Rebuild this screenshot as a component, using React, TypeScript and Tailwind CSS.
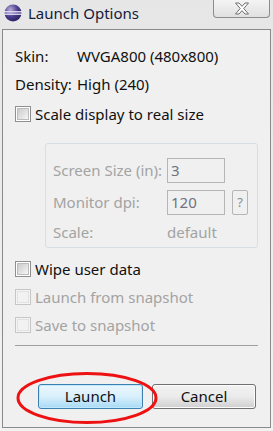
import React from 'react';

const FONT = "font-['Noto_Sans','Open_Sans',sans-serif]";

function EclipseIcon() {
  return (
    <svg width="18" height="18" viewBox="0 0 18 18">
      <defs>
        <radialGradient id="eg" cx="35%" cy="30%" r="75%">
          <stop offset="0%" stopColor="#b9a9d6" />
          <stop offset="55%" stopColor="#4b3f8f" />
          <stop offset="100%" stopColor="#2a1f5c" />
        </radialGradient>
      </defs>
      <circle cx="9" cy="9" r="8.5" fill="url(#eg)" />
      <rect x="0" y="7.2" width="18" height="1.2" fill="#f4f0ff" />
      <rect x="0" y="9.6" width="18" height="1.2" fill="#f4f0ff" />
    </svg>
  );
}

function CloseGlyph() {
  return (
    <svg width="16" height="13" viewBox="0 0 16 13">
      <path
        d="M1.5 1 H5 L8 4.3 L11 1 H14.5 L9.8 6.5 L14.5 12 H11 L8 8.7 L5 12 H1.5 L6.2 6.5 Z"
        fill="#fdfdfd"
        stroke="#6e6e6e"
        strokeWidth="1"
        strokeLinejoin="round"
      />
    </svg>
  );
}

function Checkbox({ label, disabled }: { label: string; disabled?: boolean }) {
  return (
    <div className="flex h-5 items-center">
      <span
        className={`flex h-4 w-4 items-center justify-center border ${
          disabled ? 'border-[#c6c6c6] bg-[#f4f4f4]' : 'border-[#8e8f8f] bg-white'
        }`}
      >
        <span
          className={`h-[12px] w-[12px] border ${
            disabled
              ? 'border-[#e2e2e2] bg-[#f2f2f2]'
              : 'border-[#bcbcbc] bg-gradient-to-br from-[#cbcbcb] to-[#f6f6f6]'
          }`}
        />
      </span>
      <span className={`ml-[4px] text-[15px] ${disabled ? 'text-[#a3a3a3]' : 'text-[#101010]'}`}>
        {label}
      </span>
    </div>
  );
}

function Field({ value }: { value: string }) {
  return (
    <div className="flex h-[25px] w-[58px] items-center border border-[#b5b5b5] bg-[#f0f0f0] pl-[3px] text-[15px] text-[#6f7380]">
      {value}
    </div>
  );
}

export default function App() {
  return (
    <div className={`h-[431px] w-[273px] overflow-hidden bg-gradient-to-b from-[#e6e6e6] to-[#f2f2f2] ${FONT}`}>
      {/* title bar */}
      <div className="flex h-[29px] items-start">
        <div className="ml-[4px] mt-[4px]">
          <EclipseIcon />
        </div>
        <span className="ml-[6px] mt-[2px] text-[15px] text-[#141a3a]">Launch Options</span>
        <div className="ml-auto mr-[3px] flex h-[18px] w-[57px] items-center justify-center rounded-b-[4px] border border-t-0 border-[#8c8c8c] bg-gradient-to-b from-[#f4f4f4] to-[#e0e0e0]">
          <CloseGlyph />
        </div>
      </div>

      {/* client area */}
      <div className="relative ml-[2px] h-[399px] w-[269px] border border-[#8a8a8a] bg-[#f0f0f0] pl-[12px] pr-[11px] pt-[16px] text-[15px] text-[#101010]">
        <div className="flex h-5 items-center">
          <span className="w-[62px]">Skin:</span>
          <span>WVGA800 (480x800)</span>
        </div>
        <div className="mt-[8px] flex h-5 items-center">
          <span className="w-[62px]">Density:</span>
          <span>High (240)</span>
        </div>
        <div className="mt-[10px]">
          <Checkbox label="Scale display to real size" />
        </div>

        <div className="ml-[30px] mt-[19px] h-[105px] w-[213px] rounded-[3px] border border-[#d5dfe5] pl-[7px] pt-[14px] text-[#a3a3a3]">
          <div className="flex items-center">
            <span className="w-[114px]">Screen Size (in):</span>
            <Field value="3" />
          </div>
          <div className="mt-[7px] flex items-center">
            <span className="w-[114px]">Monitor dpi:</span>
            <Field value="120" />
            <div className="ml-[7px] flex h-[25px] w-[16px] items-center justify-center rounded-[2px] border border-[#b5b5b5] text-[13px] text-[#8a8a8a]">
              ?
            </div>
          </div>
          <div className="mt-[7px] flex h-5 items-center">
            <span className="w-[114px]">Scale:</span>
            <span>default</span>
          </div>
        </div>

        <div className="mt-[11px]">
          <Checkbox label="Wipe user data" />
        </div>
        <div className="mt-[8px]">
          <Checkbox label="Launch from snapshot" disabled />
        </div>
        <div className="mt-[8px]">
          <Checkbox label="Save to snapshot" disabled />
        </div>

        <div className="mt-[10px] h-px w-[243px] bg-[#a0a0a0]" />

        <div className="mt-[38px] flex pl-[23px]">
          <button className="flex h-[25px] w-[105px] items-center justify-center rounded-[3px] border border-[#3c7fb1] bg-gradient-to-b from-[#eaf6fd] via-[#d9f0fc] to-[#a7d9f5] text-[15px] text-[#101010] shadow-[inset_0_0_0_1px_#c2e8fd]">
            Launch
          </button>
          <button className="ml-[9px] flex h-[25px] w-[104px] items-center justify-center rounded-[3px] border border-[#707070] bg-gradient-to-b from-[#f2f2f2] via-[#ebebeb] to-[#cfcfcf] text-[15px] text-[#101010] shadow-[inset_0_0_0_1px_#fcfcfc]">
            Cancel
          </button>
        </div>

        {/* red annotation ellipse */}
        <svg className="pointer-events-none absolute left-[13px] top-[341px]" width="144" height="54" viewBox="0 0 144 54">
          <ellipse cx="71" cy="27" rx="69" ry="24.5" fill="none" stroke="#ee1111" strokeWidth="3" />
        </svg>
      </div>
    </div>
  );
}
